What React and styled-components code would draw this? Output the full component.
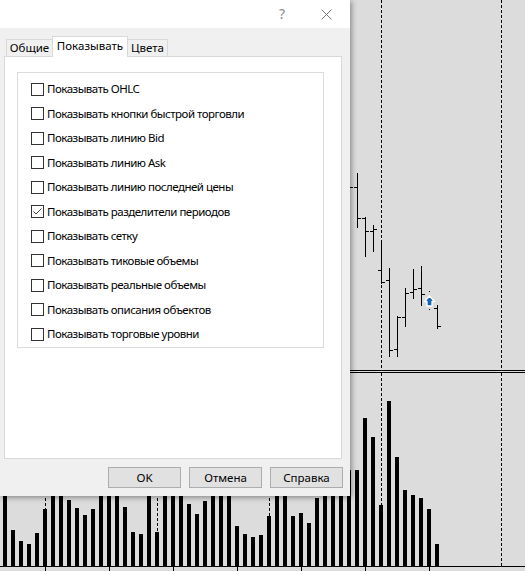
import React from 'react';
import styled, { createGlobalStyle } from 'styled-components';

const GlobalStyle = createGlobalStyle`
  html, body { margin: 0; padding: 0; background: #dcdcdc; }
  body { font-family: "Noto Sans", "Liberation Sans", sans-serif; }
  * { box-sizing: border-box; }
`;

const Screen = styled.div`
  position: relative;
  width: 525px;
  height: 571px;
  overflow: hidden;
  background: #dcdcdc;
`;

/* ---------- chart ---------- */
const ChartWindow = styled.div`
  display: flex;
  flex-direction: column;
  width: 525px;
  height: 571px;
`;

const Pane = styled.svg`
  display: block;
  flex: 0 0 ${p => p.$h}px;
  width: 525px;
  height: ${p => p.$h}px;
`;

const PaneSeparator = styled.div`
  flex: 0 0 3px;
  border-top: 1px solid #000;
  border-bottom: 1px solid #000;
`;

const separators = [45, 157, 269, 381, 501];

const volumeTops = [
  470, 530, 541, 544, 533, 509, 480, 460, 500, 508, 515, 509, 470, 450, 475,
  507, 532, 534, 480, 532, 470, 460, 480, 504, 514, 501, 485, 470, 480, 526,
  534, 537, 535, 516, 470, 480, 516, 513, 523, 498, 470, 460, 480, 470, 470,
  418, 437, 505, 401, 457, 490, 495, 498, 509, 544,
];

const priceBars = [
  { x: 349, h: 180, l: 215, o: 200, c: 187 },
  { x: 357, h: 173, l: 228, o: 187, c: 218 },
  { x: 365, h: 217, l: 257, o: 218, c: 231 },
  { x: 373, h: 225, l: 252, o: 231, c: 229 },
  { x: 381, h: 240, l: 284, o: 270, c: 282 },
  { x: 389, h: 268, l: 357, o: 280, c: 350 },
  { x: 397, h: 316, l: 357, o: 349, c: 317 },
  { x: 405, h: 288, l: 327, o: 317, c: 293 },
  { x: 413, h: 269, l: 299, o: 292, c: 289 },
  { x: 421, h: 266, l: 306, o: 288, c: 294 },
  { x: 437, h: 305, l: 329, o: 308, c: 326 },
];

const ticks = [45, 109, 173, 237, 301, 365, 429];

function MainChart() {
  return (
    <Pane $h={370} viewBox="0 0 525 370">
      {separators.map(x => (
        <line key={x} x1={x + 0.5} y1={0} x2={x + 0.5} y2={370} stroke="#000" strokeDasharray="3 2" />
      ))}
      {priceBars.map(b => (
        <g key={b.x} stroke="#000" strokeWidth="1" shapeRendering="crispEdges">
          <line x1={b.x + 0.5} y1={b.h} x2={b.x + 0.5} y2={b.l} />
          <line x1={b.x - 3} y1={b.o + 0.5} x2={b.x} y2={b.o + 0.5} />
          <line x1={b.x + 1} y1={b.c + 0.5} x2={b.x + 4} y2={b.c + 0.5} />
        </g>
      ))}
      <rect x={429} y={291} width={1} height={1} fill="#000" />
      <rect x={429} y={309} width={1} height={1} fill="#000" />
      <polygon
        points="429.5,296 434.5,301.5 432,301.5 432,306 427,306 427,301.5 424.5,301.5"
        fill="#1466b8"
        stroke="#fff"
        strokeWidth="1.3"
        strokeLinejoin="round"
      />
    </Pane>
  );
}

function VolumeChart() {
  const top = 373;
  return (
    <Pane $h={193} viewBox="0 0 525 193">
      {separators.map(x => (
        <line key={x} x1={x + 0.5} y1={0} x2={x + 0.5} y2={193} stroke="#000" strokeDasharray="3 2" />
      ))}
      {volumeTops.map((t, i) => (
        <rect key={i} x={3 + 8 * i} y={t - top} width={4} height={193 - (t - top)} fill="#000" />
      ))}
    </Pane>
  );
}

function TimeAxis() {
  return (
    <Pane $h={5} viewBox="0 0 525 5">
      <rect x={0} y={0} width={525} height={1} fill="#000" />
      {ticks.map(x => (
        <rect key={x} x={x} y={1} width={1} height={4} fill="#000" />
      ))}
    </Pane>
  );
}

/* ---------- dialog ---------- */
const Dialog = styled.div`
  position: absolute;
  left: 0;
  top: 0;
  width: 350px;
  height: 496px;
  background: #f0f0f0;
  box-shadow: 1px 1px 6px rgba(0, 0, 0, 0.45);
  display: flex;
  flex-direction: column;
  font-family: "Noto Sans", "Liberation Sans", sans-serif;
  font-size: 11px;
  color: #000;
`;

const TitleBar = styled.div`
  flex: 0 0 28px;
  background: #fff;
  display: flex;
  align-items: center;
  justify-content: flex-end;
  padding-right: 18px;
  gap: 36px;
`;

const HelpGlyph = styled.span`
  font-family: "Noto Sans", sans-serif;
  font-size: 14px;
  line-height: 14px;
  color: #8a8a8a;
  margin-top: -1px;
`;

const CloseIcon = styled.svg`
  display: block;
  width: 11px;
  height: 11px;
`;

const Body = styled.div`
  flex: 1;
  display: flex;
  flex-direction: column;
  padding: 8px 8px 0 4px;
`;

const TabStrip = styled.div`
  display: flex;
  align-items: flex-end;
  height: 20px;
  padding-left: 2px;
  position: relative;
  z-index: 1;
`;

const Tab = styled.div`
  width: ${p => p.$w}px;
  height: ${p => (p.$active ? 21 : 17)}px;
  margin-bottom: ${p => (p.$active ? -1 : 0)}px;
  background: ${p => (p.$active ? '#fff' : '#f0f0f0')};
  border: 1px solid #d9d9d9;
  border-bottom: none;
  ${p => p.$noLeft && 'border-left: none;'}
  ${p => p.$noRight && 'border-right: none;'}
  display: flex;
  justify-content: center;
  padding-top: ${p => (p.$active ? 2 : 1)}px;
  font-size: 11.5px;
  line-height: 14px;
  white-space: nowrap;
`;

const Panel = styled.div`
  width: 338px;
  height: 403px;
  background: #fff;
  border: 1px solid #d9d9d9;
  padding: 15px 0 0 12px;
`;

const GroupBox = styled.div`
  width: 307px;
  height: 276px;
  border: 1px solid #dcdcdc;
  padding: 4px 0 0 13px;
  display: grid;
  grid-auto-rows: 24.5px;
`;

const OptionRow = styled.label`
  display: flex;
  align-items: center;
  gap: 3px;
  white-space: nowrap;
  font-size: 11.5px;
  letter-spacing: -0.5px;
  line-height: 14px;
`;

const Box = styled.span`
  flex: 0 0 13px;
  width: 13px;
  height: 13px;
  border: 1px solid #333;
  background: #fff;
  display: flex;
  align-items: center;
  justify-content: center;
`;

const ButtonRow = styled.div`
  display: flex;
  justify-content: flex-end;
  gap: 8px;
  width: 339px;
  margin-top: 8px;
`;

const Button = styled.div`
  width: 73px;
  height: 21px;
  background: #e1e1e1;
  border: 1px solid #adadad;
  display: flex;
  align-items: center;
  justify-content: center;
  font-size: 11.5px;
  line-height: 14px;
`;

const options = [
  ['Показывать OHLC', false],
  ['Показывать кнопки быстрой торговли', false],
  ['Показывать линию Bid', false],
  ['Показывать линию Ask', false],
  ['Показывать линию последней цены', false],
  ['Показывать разделители периодов', true],
  ['Показывать сетку', false],
  ['Показывать тиковые объемы', false],
  ['Показывать реальные объемы', false],
  ['Показывать описания объектов', false],
  ['Показывать торговые уровни', false],
];

function CheckBox({ checked }) {
  return (
    <Box>
      {checked && (
        <svg width="11" height="11" viewBox="0 0 11 11">
          <polyline points="1.5,5.5 4,8 9.5,2.5" fill="none" stroke="#444" strokeWidth="1" />
        </svg>
      )}
    </Box>
  );
}

function PropertiesDialog() {
  return (
    <Dialog>
      <TitleBar>
        <HelpGlyph>?</HelpGlyph>
        <CloseIcon viewBox="0 0 11 11">
          <path d="M0.5 0.5 L10.5 10.5 M10.5 0.5 L0.5 10.5" stroke="#777" strokeWidth="1" />
        </CloseIcon>
      </TitleBar>
      <Body>
        <TabStrip>
          <Tab $w={46} $noRight>Общие</Tab>
          <Tab $w={76} $active>Показывать</Tab>
          <Tab $w={40} $noLeft>Цвета</Tab>
        </TabStrip>
        <Panel>
          <GroupBox>
            {options.map(([text, checked]) => (
              <OptionRow key={text}>
                <CheckBox checked={checked} />
                <span>{text}</span>
              </OptionRow>
            ))}
          </GroupBox>
        </Panel>
        <ButtonRow>
          <Button>OK</Button>
          <Button>Отмена</Button>
          <Button>Справка</Button>
        </ButtonRow>
      </Body>
    </Dialog>
  );
}

export default function App() {
  return (
    <Screen>
      <GlobalStyle />
      <ChartWindow>
        <MainChart />
        <PaneSeparator />
        <VolumeChart />
        <TimeAxis />
      </ChartWindow>
      <PropertiesDialog />
    </Screen>
  );
}
